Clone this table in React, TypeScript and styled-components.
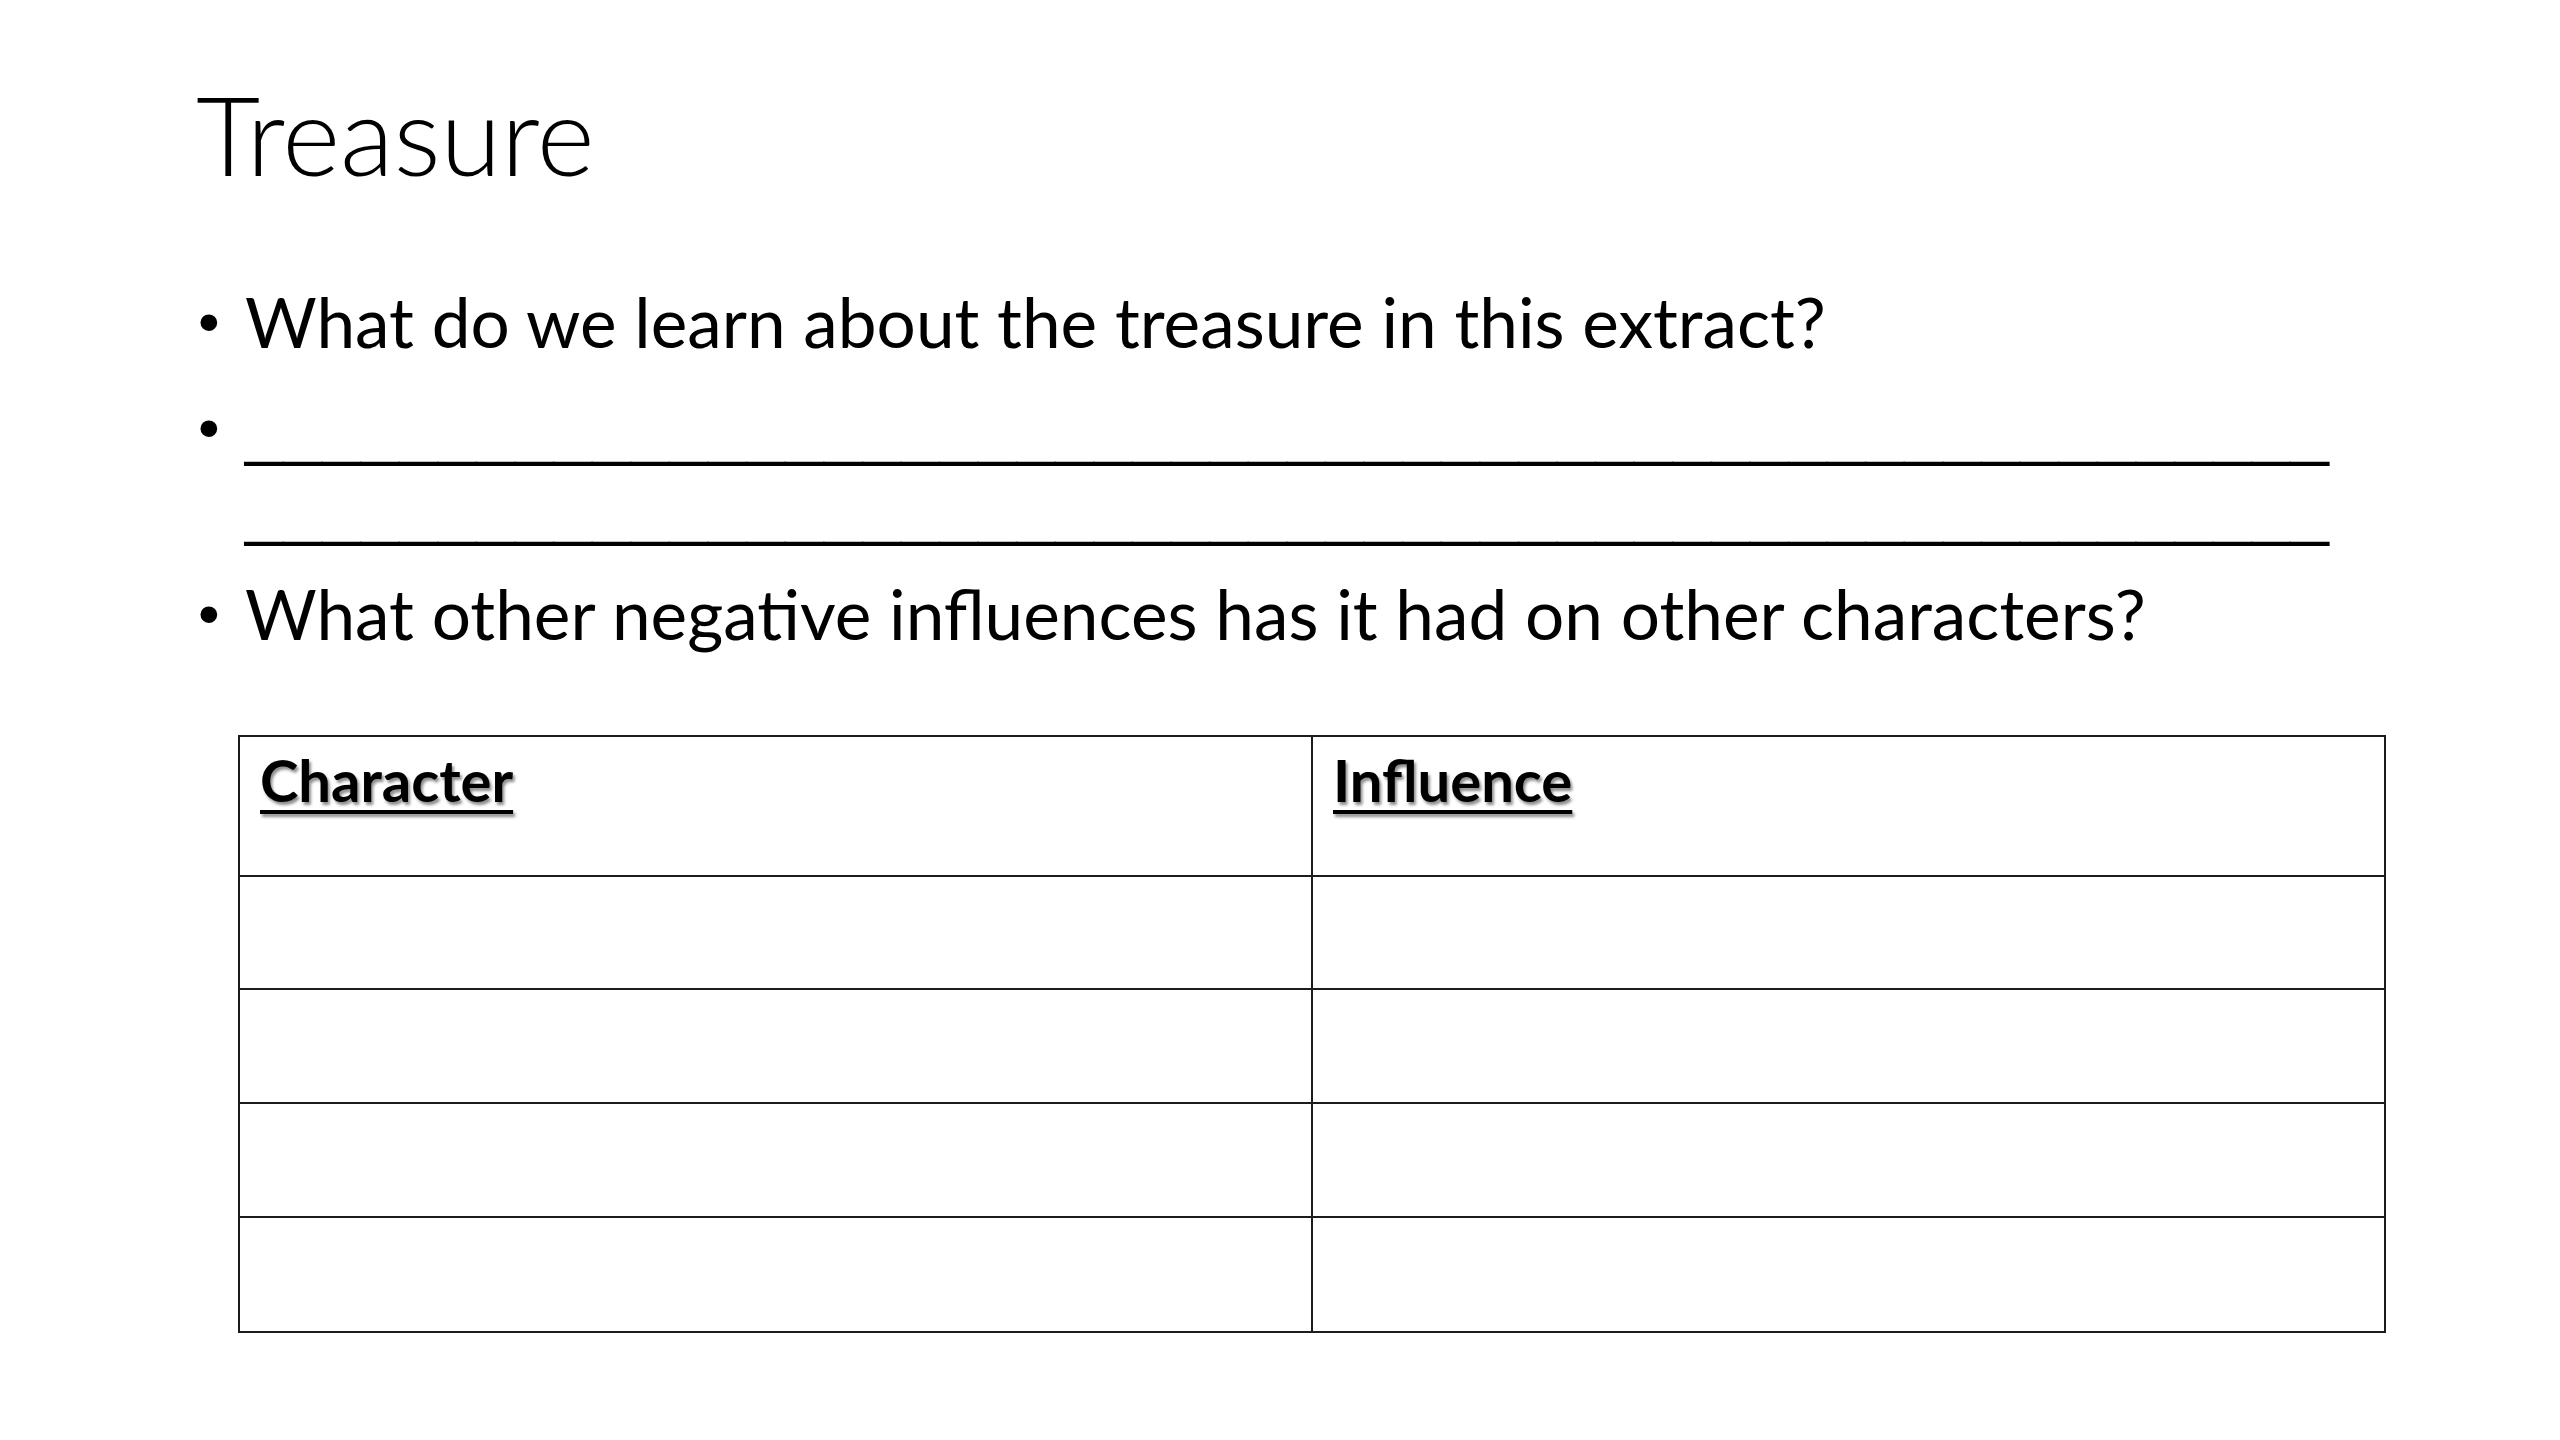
import React from "react";
import styled, { createGlobalStyle } from "styled-components";

const Global = createGlobalStyle`
  html, body { margin: 0; padding: 0; background: #ffffff; }
  body { font-family: Lato, "Open Sans", sans-serif; color: #000; }
`;

const Slide = styled.div`
  width: 2560px;
  height: 1440px;
  box-sizing: border-box;
  padding: 68px 0 0 196px;
  display: flex;
  flex-direction: column;
  background: #fff;
  overflow: hidden;
`;

const Title = styled.h1`
  margin: 0;
  font-family: Lato, "Open Sans", sans-serif;
  font-weight: 300;
  font-size: 111px;
  line-height: 130px;
  color: #000;
  letter-spacing: -0.3px;
`;

const BulletList = styled.ul`
  list-style: none;
  margin: 84px 0 0 0;
  padding: 0;
  display: flex;
  flex-direction: column;
  gap: 26px;
`;

const Item = styled.li`
  display: flex;
  align-items: flex-start;
  font-family: Lato, "Open Sans", sans-serif;
  font-size: 69.3px;
  line-height: 80px;
  color: #000;
`;

const Dot = styled.span`
  flex: 0 0 49px;
  font-family: "Liberation Sans", Arial, sans-serif;
  font-size: 62px;
  line-height: 80px;
  padding-left: 2px;
  box-sizing: border-box;
`;

const Lines = styled.div`
  display: flex;
  flex-direction: column;
  width: 2083px;
`;

const Blank = styled.span`
  display: block;
  white-space: nowrap;
  font-family: "Liberation Sans", Arial, sans-serif;
  font-size: 69.4px;
  line-height: 80px;
  letter-spacing: 0;
`;

const Table = styled.table`
  margin: 81px 0 0 42px;
  width: 2148px;
  border-collapse: collapse;
  table-layout: fixed;
`;

const Row = styled.tr<{ $h: number }>`
  height: ${(p) => p.$h}px;
`;

const Cell = styled.td`
  border: 2px solid #1c1c1c;
  padding: 8px 20px;
  vertical-align: top;
  width: 50%;
`;

const Head = styled.span`
  font-family: Lato, "Open Sans", sans-serif;
  font-weight: 700;
  font-size: 58px;
  line-height: 70px;
  text-decoration: underline;
  text-decoration-thickness: 4px;
  text-underline-offset: 8px;
  text-shadow: 2px 3px 3px rgba(0, 0, 0, 0.45);
  color: #000;
`;

const underscores = "_".repeat(54);

export default function App() {
  const rows = [113, 114, 114, 115];
  return (
    <>
      <Global />
      <Slide>
        <Title>Treasure</Title>
        <BulletList>
          <Item>
            <Dot>•</Dot>
            <span>What do we learn about the treasure in this extract?</span>
          </Item>
          <Item>
            <Dot>•</Dot>
            <Lines>
              <Blank>{underscores}</Blank>
              <Blank>{underscores}</Blank>
            </Lines>
          </Item>
          <Item>
            <Dot>•</Dot>
            <span>What other negative influences has it had on other characters?</span>
          </Item>
        </BulletList>
        <Table>
          <tbody>
            <Row $h={140}>
              <Cell>
                <Head>Character</Head>
              </Cell>
              <Cell>
                <Head>Influence</Head>
              </Cell>
            </Row>
            {rows.map((h, i) => (
              <Row key={i} $h={h}>
                <Cell />
                <Cell />
              </Row>
            ))}
          </tbody>
        </Table>
      </Slide>
    </>
  );
}
